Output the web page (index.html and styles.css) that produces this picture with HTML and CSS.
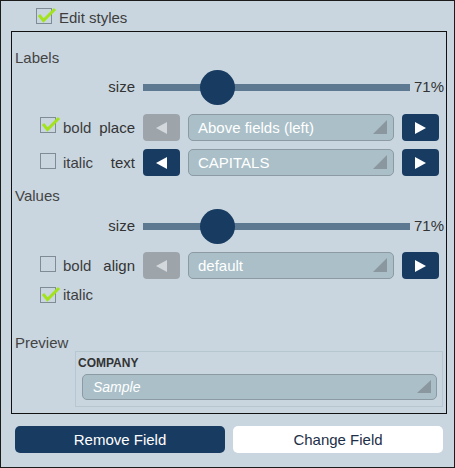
FILE: index.html
```html
<!DOCTYPE html>
<html>
<head>
<meta charset="utf-8">
<link rel="stylesheet" href="styles.css">
</head>
<body>
<div class="page">
  <div class="header">
    <span class="cb"><svg class="check" viewBox="0 0 22 18" width="22" height="18"><path d="M3 9 L7.5 14.5 L19 3" /></svg></span>
    <span class="header-label">Edit styles</span>
  </div>

  <div class="panel">
    <div class="title t-labels">Labels</div>

    <div class="row slider-row r-lsize">
      <div class="left"><span class="sub">size</span></div>
      <div class="ctrl">
        <div class="track"><span class="thumb"></span></div>
        <span class="pct">71%</span>
      </div>
    </div>

    <div class="row r-place">
      <div class="left">
        <span class="cb"><svg class="check" viewBox="0 0 22 18" width="22" height="18"><path d="M3 9 L7.5 14.5 L19 3" /></svg></span>
        <span class="cb-label">bold</span>
        <span class="sub">place</span>
      </div>
      <div class="ctrl">
        <button class="arrow disabled"><svg viewBox="0 0 11 12" width="11" height="12"><polygon points="11,0 11,12 0,6"/></svg></button>
        <div class="select"><span class="sel-text">Above fields (left)</span><i class="tri"></i></div>
        <button class="arrow"><svg viewBox="0 0 11 12" width="11" height="12"><polygon points="0,0 0,12 11,6"/></svg></button>
      </div>
    </div>

    <div class="row r-text">
      <div class="left">
        <span class="cb"></span>
        <span class="cb-label">italic</span>
        <span class="sub">text</span>
      </div>
      <div class="ctrl">
        <button class="arrow"><svg viewBox="0 0 11 12" width="11" height="12"><polygon points="11,0 11,12 0,6"/></svg></button>
        <div class="select"><span class="sel-text">CAPITALS</span><i class="tri"></i></div>
        <button class="arrow"><svg viewBox="0 0 11 12" width="11" height="12"><polygon points="0,0 0,12 11,6"/></svg></button>
      </div>
    </div>

    <div class="title t-values">Values</div>

    <div class="row slider-row r-vsize">
      <div class="left"><span class="sub">size</span></div>
      <div class="ctrl">
        <div class="track"><span class="thumb"></span></div>
        <span class="pct">71%</span>
      </div>
    </div>

    <div class="row r-align">
      <div class="left">
        <span class="cb"></span>
        <span class="cb-label">bold</span>
        <span class="sub">align</span>
      </div>
      <div class="ctrl">
        <button class="arrow disabled"><svg viewBox="0 0 11 12" width="11" height="12"><polygon points="11,0 11,12 0,6"/></svg></button>
        <div class="select"><span class="sel-text">default</span><i class="tri"></i></div>
        <button class="arrow"><svg viewBox="0 0 11 12" width="11" height="12"><polygon points="0,0 0,12 11,6"/></svg></button>
      </div>
    </div>

    <div class="row r-italic">
      <div class="left">
        <span class="cb"><svg class="check" viewBox="0 0 22 18" width="22" height="18"><path d="M3 9 L7.5 14.5 L19 3" /></svg></span>
        <span class="cb-label">italic</span>
      </div>
    </div>

    <div class="title t-preview">Preview</div>

    <div class="preview">
      <div class="pv-label">COMPANY</div>
      <div class="select pv-select"><span class="sel-text">Sample</span><i class="tri"></i></div>
    </div>
  </div>

  <div class="buttons">
    <button class="btn btn-dark">Remove Field</button>
    <button class="btn btn-light">Change Field</button>
  </div>
</div>
</body>
</html>
```

FILE: styles.css
```css
* { box-sizing: border-box; }
html, body { margin: 0; padding: 0; }
body {
  font-family: "Liberation Sans", Arial, sans-serif;
  font-size: 15px;
  color: #3a3a3a;
}
.page {
  width: 455px;
  height: 468px;
  border: 1px solid #1c1c1c;
  background: #c9d6e0;
  padding-left: 10px;
}

/* header */
.header {
  height: 30px;
  display: flex;
  align-items: flex-start;
  padding-left: 25px;
}
.header .cb { margin-top: 7px; }
.header-label {
  margin-left: 7px;
  margin-top: 8px;
  line-height: 18px;
  color: #3d3d3d;
}

/* checkbox */
.cb {
  position: relative;
  flex: none;
  width: 16px;
  height: 16px;
  border: 1px solid #7f8c96;
}
.check {
  position: absolute;
  left: -1px;
  top: -3px;
  overflow: visible;
}
.check path {
  fill: none;
  stroke: #a3e31b;
  stroke-width: 3;
  stroke-linecap: butt;
  stroke-linejoin: miter;
}

/* panel */
.panel {
  width: 436px;
  height: 383px;
  border: 1px solid #111;
}
.title {
  line-height: 18px;
  padding-left: 3px;
  color: #444;
}
.t-labels { margin-top: 17px; }
.t-values { margin-top: 11px; }
.t-preview { margin-top: 32px; line-height: 16px; }

.row {
  display: flex;
  align-items: center;
  height: 27px;
}
.slider-row { height: 34px; }
.r-lsize { margin-top: 3px; }
.r-place { margin-top: 10px; }
.r-text { margin-top: 8px; }
.r-vsize { margin-top: 4px; }
.r-align { margin-top: 9px; }
.r-italic { margin-top: 8px; height: 16px; }

.left {
  width: 123px;
  flex: none;
  display: flex;
  align-items: center;
  height: 100%;
}
.left .cb {
  margin-left: 28px;
  align-self: flex-start;
  margin-top: 4px;
}
.r-place .left .cb { margin-top: 3px; }
.r-italic .left .cb { margin-top: 0; }
.cb-label {
  margin-left: 7px;
  line-height: 18px;
  color: #3d3d3d;
}
.sub {
  margin-left: auto;
  line-height: 18px;
  color: #333;
}
.ctrl {
  margin-left: 8px;
  width: 296px;
  flex: none;
  display: flex;
  align-items: center;
  height: 100%;
  gap: 8px;
}

/* slider */
.track {
  position: relative;
  flex: none;
  width: 267px;
  height: 7px;
  background: #5d7891;
}
.thumb {
  position: absolute;
  left: 57px;
  top: -14px;
  width: 35px;
  height: 35px;
  border-radius: 50%;
  background: #183b61;
}
.slider-row .ctrl { gap: 4px; }
.pct {
  flex: none;
  line-height: 18px;
  color: #333;
  white-space: nowrap;
}

/* arrows */
.arrow {
  flex: none;
  width: 37px;
  height: 27px;
  border: none;
  border-radius: 4px;
  background: #183b61;
  padding: 0;
  display: flex;
  align-items: center;
  justify-content: center;
}
.arrow svg { fill: #ffffff; }
.arrow.disabled { background: #9da5aa; }
.arrow.disabled svg { fill: #d3d8dc; }

/* select */
.select {
  flex: none;
  width: 206px;
  height: 27px;
  border: 1px solid #8b9aa3;
  border-radius: 5px;
  background: #aabfc8;
  display: flex;
  align-items: center;
  padding: 0 6px 0 9px;
}
.sel-text {
  flex: 1;
  color: #ffffff;
  line-height: 18px;
  white-space: nowrap;
}
.tri {
  flex: none;
  align-self: flex-end;
  margin-bottom: 6px;
  width: 0;
  height: 0;
  border-left: 14px solid transparent;
  border-bottom: 14px solid #8a979e;
}

/* preview */
.preview {
  margin-left: 63px;
  width: 368px;
  height: 56px;
  border: 1px solid #b7c7d1;
  padding: 4px 0 0 2px;
}
.pv-label {
  font-size: 12px;
  font-weight: bold;
  line-height: 14px;
  color: #333;
}
.pv-select {
  margin-top: 4px;
  margin-left: 4px;
  width: 355px;
  height: 26px;
  padding-left: 10px;
  padding-right: 5px;
}
.pv-select .sel-text {
  font-size: 14px;
  font-style: italic;
}
.pv-select .tri {
  margin-bottom: 6px;
  border-left-width: 14px;
  border-bottom-width: 13px;
}

/* buttons */
.buttons {
  margin-top: 12px;
  margin-left: 4px;
  width: 428px;
  display: grid;
  grid-template-columns: 1fr 1fr;
  gap: 8px;
}
.btn {
  height: 27px;
  border: none;
  border-radius: 5px;
  font-family: "Liberation Sans", Arial, sans-serif;
  font-size: 15px;
  padding: 0;
}
.btn-dark { background: #183b61; color: #ffffff; }
.btn-light { background: #ffffff; color: #1d2f48; }
```
